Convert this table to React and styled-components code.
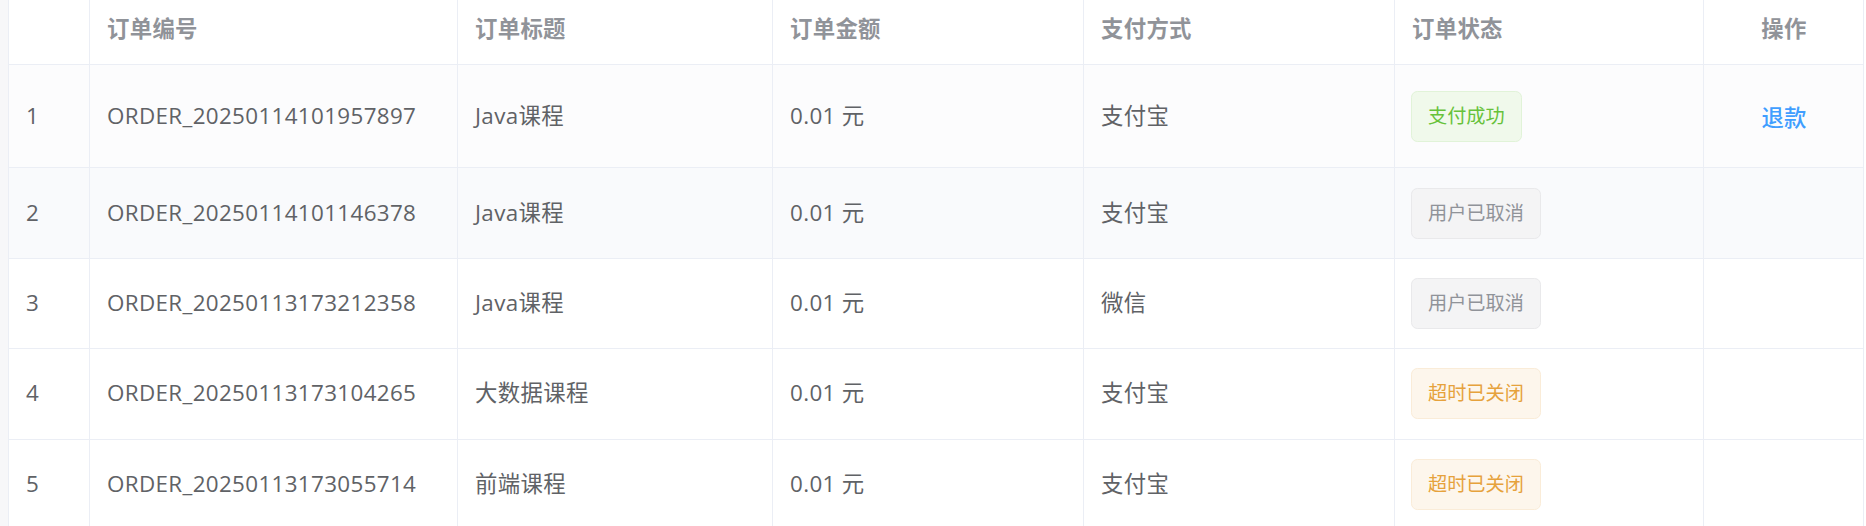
import styled, { createGlobalStyle } from 'styled-components';

//  Element-style order table, rendered at 160% scale
const columns = '81px 368px 315px 311px 311px 309px 160px';

const orders = [
  {
    id: 'ORDER_20250114101957897',
    title: 'Java课程',
    amount: '0.01 元',
    pay: '支付宝',
    status: 'success',
    refundable: true,
  },
  {
    id: 'ORDER_20250114101146378',
    title: 'Java课程',
    amount: '0.01 元',
    pay: '支付宝',
    status: 'cancel',
  },
  {
    id: 'ORDER_20250113173212358',
    title: 'Java课程',
    amount: '0.01 元',
    pay: '微信',
    status: 'cancel',
  },
  {
    id: 'ORDER_20250113173104265',
    title: '大数据课程',
    amount: '0.01 元',
    pay: '支付宝',
    status: 'closed',
  },
  {
    id: 'ORDER_20250113173055714',
    title: '前端课程',
    amount: '0.01 元',
    pay: '支付宝',
    status: 'closed',
  },
];

const statusText = {
  success: '支付成功',
  cancel: '用户已取消',
  closed: '超时已关闭',
};

const tagColors = {
  success: { bg: '#f0f9eb', border: '#e1f3d8', color: '#67c23a' },
  cancel: { bg: '#f4f4f5', border: '#e9e9eb', color: '#909399' },
  closed: { bg: '#fdf6ec', border: '#faecd8', color: '#e6a23c' },
};

const rowBackgrounds = ['#fcfcfd', '#f9fafc', '#ffffff', '#ffffff', '#ffffff'];

const GlobalStyle = createGlobalStyle`
  html, body {
    margin: 0;
    padding: 0;
    background: #ffffff;
    overflow: hidden;
  }
  body {
    font-family: "Open Sans", "Noto Sans CJK SC", sans-serif;
  }
`;

const Page = styled.div`
  display: flex;
  width: 1866px;
  height: 526px;
  overflow: hidden;
`;

const Gutter = styled.div`
  width: 8px;
  flex-shrink: 0;
  background: #f7f7f9;
`;

const Table = styled.div`
  width: 1856px;
  flex-shrink: 0;
  border-left: 1px solid #ebeef5;
  box-sizing: border-box;
`;

const Row = styled.div`
  display: grid;
  grid-template-columns: ${columns};
  background: ${(p) => p.$bg || '#ffffff'};
`;

const HeadCell = styled.div`
  box-sizing: border-box;
  height: 65px;
  padding: 0 16px 6px 17px;
  display: flex;
  align-items: center;
  justify-content: ${(p) => (p.$center ? 'center' : 'flex-start')};
  border-right: 1px solid #ebeef5;
  border-bottom: 1px solid #ebeef5;
  font-size: 22.4px;
  font-weight: 700;
  color: #909399;
  line-height: 36.8px;
  letter-spacing: 0.3px;
`;

const Cell = styled.div`
  box-sizing: border-box;
  padding: 19.2px 16px 19.2px 17px;
  display: flex;
  align-items: center;
  justify-content: ${(p) => (p.$center ? 'center' : 'flex-start')};
  border-right: 1px solid #ebeef5;
  border-bottom: 1px solid #ebeef5;
  font-size: 22.4px;
  color: #606266;
  line-height: 36.8px;
  letter-spacing: 0.35px;
  white-space: nowrap;
`;

const Tag = styled.span`
  box-sizing: border-box;
  display: inline-flex;
  align-items: center;
  height: 51px;
  padding: 0 16px;
  margin-left: -1px;
  font-size: 19.2px;
  letter-spacing: 0;
  border-radius: 6.4px;
  border: 1px solid ${(p) => tagColors[p.$type].border};
  background: ${(p) => tagColors[p.$type].bg};
  color: ${(p) => tagColors[p.$type].color};
`;

const TextButton = styled.button`
  box-sizing: border-box;
  height: 64px;
  padding: 0;
  border: 1px solid transparent;
  background: transparent;
  font-family: inherit;
  font-size: 22.4px;
  font-weight: 500;
  color: #409eff;
  cursor: pointer;
`;

export default function App() {
  return (
    <>
      <GlobalStyle />
      <Page>
        <Gutter />
        <Table>
          <Row>
            <HeadCell />
            <HeadCell>订单编号</HeadCell>
            <HeadCell>订单标题</HeadCell>
            <HeadCell>订单金额</HeadCell>
            <HeadCell>支付方式</HeadCell>
            <HeadCell>订单状态</HeadCell>
            <HeadCell $center>操作</HeadCell>
          </Row>
          {orders.map((order, i) => (
            <Row key={order.id} $bg={rowBackgrounds[i]}>
              <Cell>{i + 1}</Cell>
              <Cell>{order.id}</Cell>
              <Cell>{order.title}</Cell>
              <Cell>{order.amount}</Cell>
              <Cell>{order.pay}</Cell>
              <Cell>
                <Tag $type={order.status}>{statusText[order.status]}</Tag>
              </Cell>
              <Cell $center>
                {order.refundable && <TextButton>退款</TextButton>}
              </Cell>
            </Row>
          ))}
        </Table>
      </Page>
    </>
  );
}
